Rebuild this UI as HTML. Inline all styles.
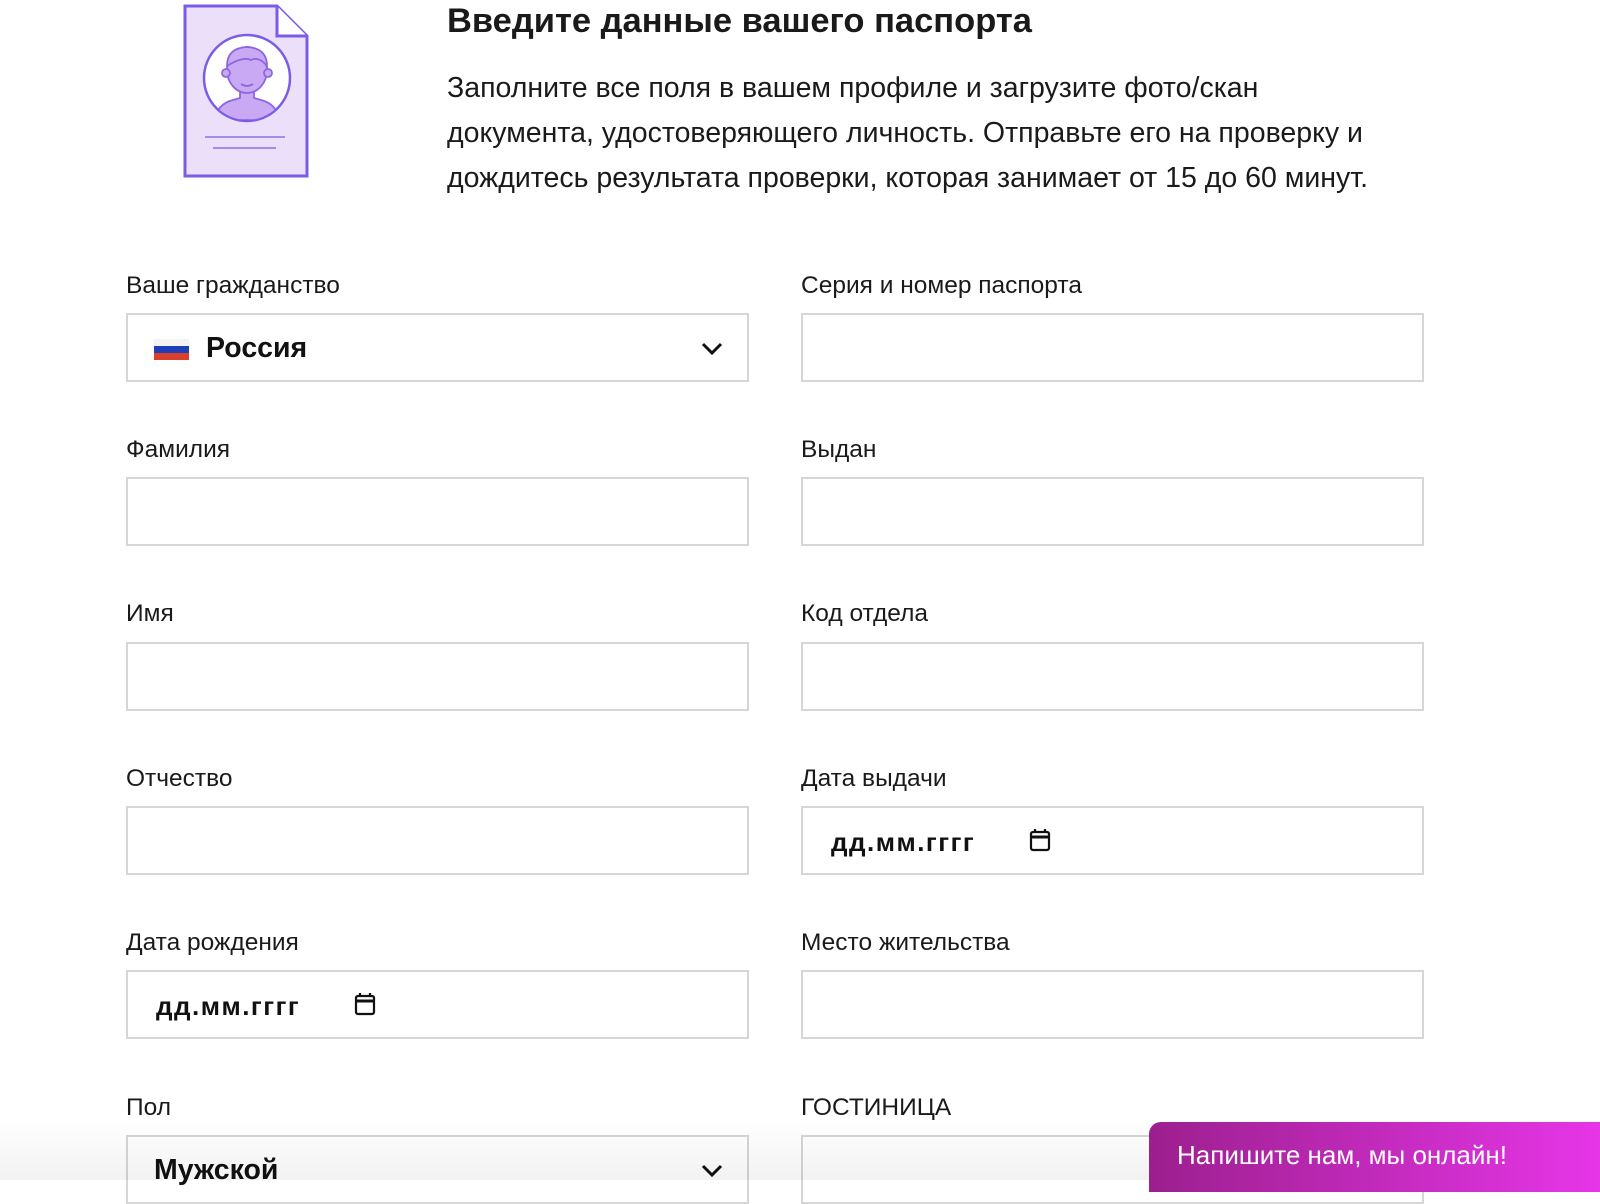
<!DOCTYPE html>
<html><head><meta charset="utf-8"><style>
*{box-sizing:border-box;margin:0;padding:0}
body{width:1600px;height:1180px;overflow:hidden;background:#fff;font-family:"Liberation Sans",Arial,sans-serif;color:#111;position:relative}
h1{position:absolute;left:447px;top:2px;font-size:34.5px;font-weight:bold;color:#1a1a1a;white-space:nowrap}
.p{position:absolute;left:447px;top:66px;font-size:28.5px;line-height:45px;color:#1a1a1a;width:1150px;white-space:nowrap}
.lab{position:absolute;font-size:24.5px;color:#1a1a1a;white-space:nowrap}
.in{position:absolute;width:623px;height:69px;border:2px solid #d6d6d6;background:#fff}
.val{position:absolute;font-size:28.5px;font-weight:bold;top:17px}
.date{position:absolute;top:19px;font-size:26px;font-weight:bold;letter-spacing:1.5px}
.chev{position:absolute;top:27px;right:24px}
.shadow{position:absolute;left:0;top:1120px;width:1600px;height:60px;background:linear-gradient(#fff0,#0000000d)}
.chat{position:absolute;left:1149px;top:1122px;width:460px;height:70px;border-radius:12px 0 0 0;background:linear-gradient(90deg,#9c1f8e,#e836ea);color:#fff;font-size:26px;padding:18px 0 0 28px;white-space:nowrap}
</style></head><body>
<svg style="position:absolute;left:183px;top:4px" width="130" height="176" viewBox="0 0 130 176">
<path d="M2 2H94L124 32V172H2Z" fill="#ecdffa" stroke="#7b5ce6" stroke-width="3"/>
<path d="M94 2V32H124" fill="#fff" stroke="#7b5ce6" stroke-width="3"/>
<circle cx="64" cy="74" r="43" fill="#fff" stroke="#7b5ce6" stroke-width="2.5"/>
<clipPath id="c"><circle cx="64" cy="74" r="42"/></clipPath>
<g clip-path="url(#c)" fill="#c9a9f3" stroke="#8b66e0" stroke-width="1.8">
<path d="M32 116Q34 100 50 96L57 94V86H71V94L78 96Q94 100 96 116Z"/>
<ellipse cx="64" cy="66" rx="20" ry="23"/>
<circle cx="43" cy="69" r="4"/><circle cx="85" cy="69" r="4"/>
<path d="M44 62Q44 44 64 43Q84 44 84 62Q76 52 68 56Q60 52 44 62Z"/>
<path d="M58 80Q64 84 70 80" fill="none"/>
</g>
<line x1="22" y1="133" x2="102" y2="133" stroke="#9b7fe8" stroke-width="1.8"/>
<line x1="30" y1="144" x2="93" y2="144" stroke="#9b7fe8" stroke-width="1.8"/>
</svg>
<h1>Введите данные вашего паспорта</h1>
<div class="p">Заполните все поля в вашем профиле и загрузите фото/скан<br>документа, удостоверяющего личность. Отправьте его на проверку и<br>дождитесь результата проверки, которая занимает от 15 до 60 минут.</div>

<div class="lab" style="left:126px;top:272px">Ваше гражданство</div>
<div class="in" style="left:126px;top:313px">
<div style="position:absolute;left:26px;top:24px;width:35px;height:21px;background:linear-gradient(#f4f4f4 33%,#1f3fb8 33% 66%,#d9402c 66%)"></div>
<div class="val" style="left:78px">Россия</div>
<svg class="chev" width="22" height="14" viewBox="0 0 22 14"><path d="M2 2L11 11L20 2" fill="none" stroke="#111" stroke-width="3"/></svg>
</div>
<div class="lab" style="left:801px;top:272px">Серия и номер паспорта</div>
<div class="in" style="left:801px;top:313px"></div>

<div class="lab" style="left:126px;top:436px">Фамилия</div>
<div class="in" style="left:126px;top:477px"></div>
<div class="lab" style="left:801px;top:436px">Выдан</div>
<div class="in" style="left:801px;top:477px"></div>

<div class="lab" style="left:126px;top:600px">Имя</div>
<div class="in" style="left:126px;top:642px"></div>
<div class="lab" style="left:801px;top:600px">Код отдела</div>
<div class="in" style="left:801px;top:642px"></div>

<div class="lab" style="left:126px;top:765px">Отчество</div>
<div class="in" style="left:126px;top:806px"></div>
<div class="lab" style="left:801px;top:765px">Дата выдачи</div>
<div class="in" style="left:801px;top:806px">
<div class="date" style="left:28px">дд.мм.гггг</div>
<svg style="position:absolute;left:226px;top:20px" width="22" height="24" viewBox="0 0 22 24"><rect x="2" y="4" width="18" height="18" rx="2" fill="none" stroke="#111" stroke-width="2.2"/><line x1="2" y1="9" x2="20" y2="9" stroke="#111" stroke-width="3"/><line x1="6" y1="1" x2="6" y2="5" stroke="#111" stroke-width="2.2"/><line x1="16" y1="1" x2="16" y2="5" stroke="#111" stroke-width="2.2"/></svg>
</div>

<div class="lab" style="left:126px;top:929px">Дата рождения</div>
<div class="in" style="left:126px;top:970px">
<div class="date" style="left:28px">дд.мм.гггг</div>
<svg style="position:absolute;left:226px;top:20px" width="22" height="24" viewBox="0 0 22 24"><rect x="2" y="4" width="18" height="18" rx="2" fill="none" stroke="#111" stroke-width="2.2"/><line x1="2" y1="9" x2="20" y2="9" stroke="#111" stroke-width="3"/><line x1="6" y1="1" x2="6" y2="5" stroke="#111" stroke-width="2.2"/><line x1="16" y1="1" x2="16" y2="5" stroke="#111" stroke-width="2.2"/></svg>
</div>
<div class="lab" style="left:801px;top:929px">Место жительства</div>
<div class="in" style="left:801px;top:970px"></div>

<div class="lab" style="left:126px;top:1094px">Пол</div>
<div class="in" style="left:126px;top:1135px">
<div class="val" style="left:26px">Мужской</div>
<svg class="chev" width="22" height="14" viewBox="0 0 22 14"><path d="M2 2L11 11L20 2" fill="none" stroke="#111" stroke-width="3"/></svg>
</div>
<div class="lab" style="left:801px;top:1094px">ГОСТИНИЦА</div>
<div class="in" style="left:801px;top:1135px"></div>

<div class="shadow"></div>
<div class="chat">Напишите нам, мы онлайн!</div>
</body></html>
